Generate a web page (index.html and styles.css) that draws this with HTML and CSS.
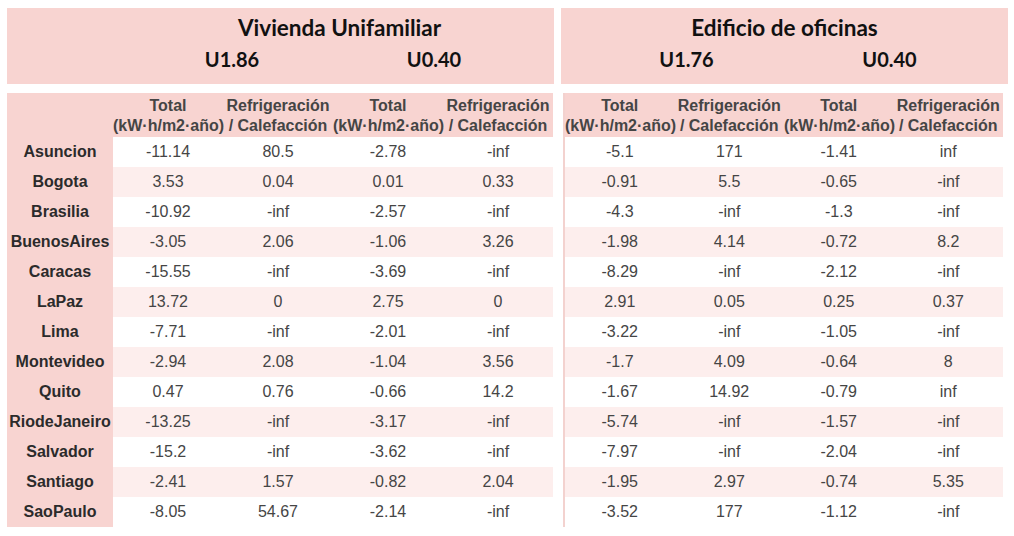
FILE: index.html
```html
<!DOCTYPE html>
<html lang="es">
<head>
<meta charset="utf-8">
<title>Vivienda Unifamiliar / Edificio de oficinas</title>
<link rel="stylesheet" href="styles.css">
</head>
<body>
<div class="page">
  <div class="heads">
    <div class="box box-left">
      <div class="title">Vivienda Unifamiliar</div>
      <div class="sub">
        <span class="u u1">U1.86</span>
        <span class="u u2">U0.40</span>
      </div>
    </div>
    <div class="box box-right">
      <div class="title">Edificio de oficinas</div>
      <div class="sub">
        <span class="u u1">U1.76</span>
        <span class="u u2">U0.40</span>
      </div>
    </div>
  </div>

  <div class="tables">
    <div class="tbl tbl-left">
      <div class="row hdr"><div class="name"></div><div class="c">Total<br>(kW·h/m2·año)</div><div class="c">Refrigeración<br>/ Calefacción</div><div class="c">Total<br>(kW·h/m2·año)</div><div class="c">Refrigeración<br>/ Calefacción</div></div>
      <div class="row"><div class="name">Asuncion</div><div class="c">-11.14</div><div class="c">80.5</div><div class="c">-2.78</div><div class="c">-inf</div></div>
      <div class="row alt"><div class="name">Bogota</div><div class="c">3.53</div><div class="c">0.04</div><div class="c">0.01</div><div class="c">0.33</div></div>
      <div class="row"><div class="name">Brasilia</div><div class="c">-10.92</div><div class="c">-inf</div><div class="c">-2.57</div><div class="c">-inf</div></div>
      <div class="row alt"><div class="name">BuenosAires</div><div class="c">-3.05</div><div class="c">2.06</div><div class="c">-1.06</div><div class="c">3.26</div></div>
      <div class="row"><div class="name">Caracas</div><div class="c">-15.55</div><div class="c">-inf</div><div class="c">-3.69</div><div class="c">-inf</div></div>
      <div class="row alt"><div class="name">LaPaz</div><div class="c">13.72</div><div class="c">0</div><div class="c">2.75</div><div class="c">0</div></div>
      <div class="row"><div class="name">Lima</div><div class="c">-7.71</div><div class="c">-inf</div><div class="c">-2.01</div><div class="c">-inf</div></div>
      <div class="row alt"><div class="name">Montevideo</div><div class="c">-2.94</div><div class="c">2.08</div><div class="c">-1.04</div><div class="c">3.56</div></div>
      <div class="row"><div class="name">Quito</div><div class="c">0.47</div><div class="c">0.76</div><div class="c">-0.66</div><div class="c">14.2</div></div>
      <div class="row alt"><div class="name">RiodeJaneiro</div><div class="c">-13.25</div><div class="c">-inf</div><div class="c">-3.17</div><div class="c">-inf</div></div>
      <div class="row"><div class="name">Salvador</div><div class="c">-15.2</div><div class="c">-inf</div><div class="c">-3.62</div><div class="c">-inf</div></div>
      <div class="row alt"><div class="name">Santiago</div><div class="c">-2.41</div><div class="c">1.57</div><div class="c">-0.82</div><div class="c">2.04</div></div>
      <div class="row"><div class="name">SaoPaulo</div><div class="c">-8.05</div><div class="c">54.67</div><div class="c">-2.14</div><div class="c">-inf</div></div>
    </div>

    <div class="tbl tbl-right">
      <div class="row hdr"><div class="c">Total<br>(kW·h/m2·año)</div><div class="c">Refrigeración<br>/ Calefacción</div><div class="c">Total<br>(kW·h/m2·año)</div><div class="c">Refrigeración<br>/ Calefacción</div></div>
      <div class="row"><div class="c">-5.1</div><div class="c">171</div><div class="c">-1.41</div><div class="c">inf</div></div>
      <div class="row alt"><div class="c">-0.91</div><div class="c">5.5</div><div class="c">-0.65</div><div class="c">-inf</div></div>
      <div class="row"><div class="c">-4.3</div><div class="c">-inf</div><div class="c">-1.3</div><div class="c">-inf</div></div>
      <div class="row alt"><div class="c">-1.98</div><div class="c">4.14</div><div class="c">-0.72</div><div class="c">8.2</div></div>
      <div class="row"><div class="c">-8.29</div><div class="c">-inf</div><div class="c">-2.12</div><div class="c">-inf</div></div>
      <div class="row alt"><div class="c">2.91</div><div class="c">0.05</div><div class="c">0.25</div><div class="c">0.37</div></div>
      <div class="row"><div class="c">-3.22</div><div class="c">-inf</div><div class="c">-1.05</div><div class="c">-inf</div></div>
      <div class="row alt"><div class="c">-1.7</div><div class="c">4.09</div><div class="c">-0.64</div><div class="c">8</div></div>
      <div class="row"><div class="c">-1.67</div><div class="c">14.92</div><div class="c">-0.79</div><div class="c">inf</div></div>
      <div class="row alt"><div class="c">-5.74</div><div class="c">-inf</div><div class="c">-1.57</div><div class="c">-inf</div></div>
      <div class="row"><div class="c">-7.97</div><div class="c">-inf</div><div class="c">-2.04</div><div class="c">-inf</div></div>
      <div class="row alt"><div class="c">-1.95</div><div class="c">2.97</div><div class="c">-0.74</div><div class="c">5.35</div></div>
      <div class="row"><div class="c">-3.52</div><div class="c">177</div><div class="c">-1.12</div><div class="c">-inf</div></div>
    </div>
  </div>
</div>
</body>
</html>
```

FILE: styles.css
```css
html, body {
  margin: 0;
  padding: 0;
  background: #ffffff;
}

.page {
  padding: 8px 6px 0 7px;
  font-family: "Liberation Sans", Arial, sans-serif;
}

.heads {
  display: flex;
  gap: 7px;
}

.box {
  background: #f8d4d1;
  height: 76px;
  box-sizing: border-box;
  padding-top: 7px;
  font-family: Lato, "Open Sans", sans-serif;
  font-weight: 700;
  color: #111;
}

.box-left { width: 547px; }
.box-right { width: 447px; }

.title {
  font-size: 22.5px;
  line-height: 26px;
  text-align: center;
}

.sub {
  margin-top: 5px;
  display: grid;
  font-size: 20px;
  line-height: 26px;
  text-align: center;
}

.box-left .title { padding-left: 118px; }
.box-left .sub { grid-template-columns: 116px 218px 186px; }
.box-left .u1 { grid-column: 2; }
.box-left .u2 { grid-column: 3; }

.box-right .sub { grid-template-columns: 251px 155px; }

.tables {
  display: flex;
  margin-top: 9px;
  gap: 10px;
}

.row {
  display: grid;
  height: 30px;
  align-items: center;
  background: #ffffff;
}

.tbl-left .row { grid-template-columns: 106px repeat(4, 110px); }
.tbl-right .row { grid-template-columns: repeat(4, 109.5px); }

.tbl-right {
  border-left: 2px solid #f3d2cf;
}

.row.alt { background: #fdeeed; }

.row.hdr {
  height: 44px;
  background: #f8d4d1;
  font-weight: 700;
  font-size: 16px;
  line-height: 20px;
  color: #333;
}

.row.hdr .c {
  white-space: nowrap;
  padding-top: 1px;
}

.c {
  text-align: center;
  font-size: 16px;
  color: #454545;
}

.name {
  align-self: stretch;
  background: #f8d4d1;
  font-weight: 700;
  font-size: 16px;
  color: #2b2b2b;
  display: flex;
  align-items: center;
  justify-content: center;
}
```
